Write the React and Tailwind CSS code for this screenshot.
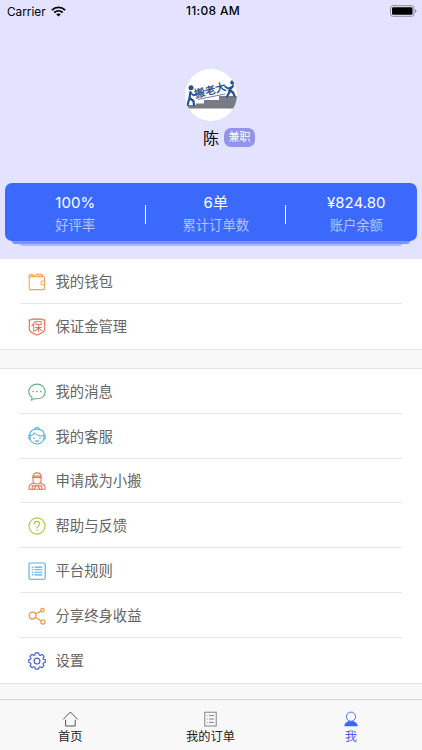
import React from "react";

const iconProps = {
	width: 18,
	height: 18,
	viewBox: "0 0 18 18",
	fill: "none",
	strokeWidth: 1.1,
	strokeLinecap: "round",
	strokeLinejoin: "round",
};

const WalletIcon = () => (
	<svg {...iconProps} stroke="#f2a654">
		<rect x="1.2" y="3.6" width="15.4" height="13" rx="1.2" />
		<path d="M1.2 4.2V2.4Q1.2 1.6 2 1.6H4.6M13.6 1.6Q14.9 1.6 14.9 3.4M3.5 3.5L9.4 1L10.8 3.4M10.2 1.3L12.8 1.1L13.4 3.4" />
		<path d="M16.6 8H14.8A1.9 1.9 0 0 0 14.8 11.8H16.6" />
	</svg>
);

const DepositIcon = () => (
	<svg {...iconProps} stroke="#e0684a">
		<path d="M1.2 1.8Q3 2.4 4.2 1.1H13.8Q15 2.4 16.8 1.8V4.4Q15.8 5.8 16.8 7.4V11C16.8 14.3 13 15.4 9 17.1C5 15.4 1.2 14.3 1.2 11V7.4Q2.2 5.8 1.2 4.4Z" />
		<text
			x="9"
			y="12.8"
			textAnchor="middle"
			fontSize="11.5"
			fill="#e0684a"
			stroke="none"
			className="font-['Noto_Sans_CJK_SC',sans-serif]"
		>
			保
		</text>
	</svg>
);

const MessageIcon = () => (
	<svg {...iconProps} stroke="#5fb283">
		<path d="M4 14.2C2 12.9 .8 10.9 .8 8.7C.8 4.5 4.4 1.1 9 1.1S17.2 4.5 17.2 8.7S13.6 15.8 9 15.8C8.2 15.8 7.4 15.7 6.7 15.5Q5.4 17.1 3.3 17.2Q4.4 15.9 4 14.2Z" />
		<path d="M5.1 8.4H5.3M8.9 8.4H9.1M12.7 8.4H12.9" strokeWidth="1.5" />
	</svg>
);

const ServiceIcon = () => (
	<svg {...iconProps} stroke="#58aedb">
		<path d="M1.9 7.6C1.9 4.1 4.8 2.2 9 2.2S16.1 4.1 16.1 7.6V10.4C16.1 14.3 12.8 17 9 17S1.9 14.3 1.9 10.4Z" />
		<path d="M6.6 2.2C6.8 .1 11.2 .1 11.4 2.2M2.2 8.9Q5.4 8.4 6.4 6Q9 9.2 15.8 8.9" />
		<path d="M1.7 8H.9V12H2.1M16.3 8H17.1V12H15.9M7.3 13.8Q9 14.9 10.7 13.8" />
		<path d="M6 11V11.2M12 11V11.2" strokeWidth="1.5" />
	</svg>
);

const WorkerIcon = () => (
	<svg {...iconProps} stroke="#e87657">
		<path d="M4.8 5.2C4.8 2.5 6.5 .9 9 .9S13.2 2.5 13.2 5.2M4.4 5.4H13.6M5 5.6V8.6C5 10.8 6.8 12 9 12S13 10.8 13 8.6V5.6M6 4H12" />
		<path d="M5.6 11L3 12.3Q1 13.2 1 15.2V17.2H17V15.2Q17 13.2 15 12.3L12.4 11" />
		<path d="M4.2 17V13.9H13.8V17M6.4 16.8L7.8 14.4M11.6 16.8L10.2 14.4" />
	</svg>
);

const HelpIcon = () => (
	<svg {...iconProps} stroke="#a9c944">
		<circle cx="9" cy="9" r="8.1" />
		<path d="M6.4 7C6.4 5.2 7.5 4.3 9 4.3S11.6 5.3 11.6 6.8C11.6 8.8 9 8.9 9 11" strokeWidth="1.2" />
		<path d="M9 13.2V13.4" strokeWidth="1.5" />
	</svg>
);

const RulesIcon = () => (
	<svg {...iconProps} stroke="#58a9de">
		<rect x="1" y="1" width="16.2" height="16.2" rx="1.4" />
		<path d="M4.2 5.1H5M7 5.1H13.8M4.2 7.7H5M7 7.7H13.8M4.2 10.3H5M7 10.3H13.8M4.2 12.9H5M7 12.9H13.8" />
	</svg>
);

const ShareIcon = () => (
	<svg {...iconProps} stroke="#f0994d" strokeWidth="1.3">
		<circle cx="4.5" cy="8.6" r="3.4" />
		<circle cx="14.4" cy="3.2" r="1.7" />
		<circle cx="14.9" cy="15" r="2.1" />
		<path d="M7.5 7L12.8 4.1M7.4 10.5L13.1 13.8" />
	</svg>
);

const SettingsIcon = () => (
	<svg {...iconProps} stroke="#4a62c8" strokeWidth="1.2">
		<path d="M7.4 .9H10.6L11.1 2.9L12.2 3.4L14.1 2.3L16.1 4.4L15 6.2L15.4 7.2L17.3 7.6V10.5L15.4 11L15 12L16 13.7L13.9 15.8L12.1 14.8L11 15.3L10.6 17.2H7.4L7 15.3L5.9 14.8L4.2 15.8L2 13.7L3 12L2.6 11L.8 10.5V7.6L2.6 7.2L3 6.2L1.9 4.4L3.9 2.3L5.8 3.4L6.9 2.9Z" />
		<circle cx="9" cy="9.1" r="2.9" />
	</svg>
);

const HomeIcon = () => (
	<svg width="16" height="16" viewBox="0 0 16 16" fill="none" stroke="#444" strokeWidth="0.9">
		<path d="M1.2 8.4L8.4 1L15.6 8.4M3.6 8.8V15H13.2V8.8" />
	</svg>
);

const OrderIcon = () => (
	<svg width="16" height="16" viewBox="0 0 16 16" fill="none" stroke="#777" strokeWidth="0.9">
		<rect x="2.8" y="1.2" width="11.4" height="13.8" />
		<path d="M4.8 4.6H5.6M7 4.6H12M4.8 8H5.6M7 8H12M4.8 11.4H5.6M7 11.4H12" />
	</svg>
);

const MeIcon = () => (
	<svg width="16" height="16" viewBox="0 0 16 16" fill="none">
		<path d="M1.2 15.2C1.6 11.9 3.8 10 8 9.4C12.2 10 14.4 11.9 14.8 15.2Z" fill="#3c68f8" />
		<circle cx="8" cy="5.7" r="4.6" fill="#f8f8f8" stroke="#3c68f8" strokeWidth="0.9" />
	</svg>
);

const Logo = () => (
	<svg width="52" height="52" viewBox="0 0 52 52">
		<defs>
			<clipPath id="avatar">
				<circle cx="26" cy="26" r="26" />
			</clipPath>
		</defs>
		<circle cx="26" cy="26" r="26" fill="#fff" />
		<g clipPath="url(#avatar)">
			<path d="M1 39.5V36H11V34.5H19V31H34V27H52V39.5Z" fill="#777a80" />
			<path d="M19 35H52M34 31H52" stroke="#8e9196" strokeWidth="0.4" />
			<g fill="none" stroke="#24508f" strokeWidth="2.2" strokeLinecap="round" strokeLinejoin="round">
				<path d="M5.5 23L4.5 29L8.5 32L9 36M4.5 29L2.5 36" />
				<path d="M5.5 23.5L8.5 26.5L11 25" strokeWidth="1.6" />
				<path d="M48 17L44.5 21L48 23.5L49.5 27M44.5 21L44 24L42 27.5" />
				<path d="M46.5 18L43 19.5L40 17.5" strokeWidth="1.6" />
			</g>
			<circle cx="6" cy="18.7" r="2.5" fill="#24508f" />
			<circle cx="47.5" cy="13.5" r="2.2" fill="#24508f" />
			<path d="M13 30.5L40 25" stroke="#24508f" strokeWidth="0.7" />
			<text
				x="10.6"
				y="29"
				fontSize="10.7"
				fontWeight="500"
				fill="#24508f"
				stroke="#24508f"
				strokeWidth="0.2"
				transform="rotate(-14 10.6 29)"
				className="font-['Noto_Sans_CJK_SC',sans-serif]"
			>
				搬老大
			</text>
		</g>
	</svg>
);

const stats = [
	{ value: "100%", label: "好评率" },
	{ value: "6单", label: "累计订单数" },
	{ value: "¥824.80", label: "账户余额" },
];

const accountMenu = [
	{ title: "我的钱包", Icon: WalletIcon },
	{ title: "保证金管理", Icon: DepositIcon },
];

const serviceMenu = [
	{ title: "我的消息", Icon: MessageIcon },
	{ title: "我的客服", Icon: ServiceIcon },
	{ title: "申请成为小搬", Icon: WorkerIcon },
	{ title: "帮助与反馈", Icon: HelpIcon },
	{ title: "平台规则", Icon: RulesIcon },
	{ title: "分享终身收益", Icon: ShareIcon },
	{ title: "设置", Icon: SettingsIcon },
];

const tabs = [
	{ title: "首页", Icon: HomeIcon },
	{ title: "我的订单", Icon: OrderIcon },
	{ title: "我", Icon: MeIcon, active: true },
];

const StatusBar = () => (
	<div className="grid grid-cols-3 items-center h-[22px] pl-[7px] pr-[5px] text-[12px] text-black">
		<div className="flex items-center gap-[5px]">
			<span className="text-[11.8px] leading-[18px] pt-px">Carrier</span>
			<svg width="15" height="11" viewBox="0 0 15 11" fill="none" stroke="#000">
				<path d="M.9 4.1C4.6 .5 10.4 .5 14.1 4.1" strokeWidth="1.9" />
				<path d="M3.3 6.5C5.7 4.2 9.3 4.2 11.7 6.5" strokeWidth="1.8" />
				<path d="M7.5 10.6L5.2 8.3C6.5 7.1 8.5 7.1 9.8 8.3Z" fill="#000" stroke="none" />
			</svg>
		</div>
		<span className="text-center font-medium tracking-[0.3px] pl-0.5 whitespace-nowrap">11:08 AM</span>
		<svg className="justify-self-end" width="27" height="12" viewBox="0 0 27 12">
			<rect x=".5" y=".7" width="23.5" height="10.6" rx="2.4" fill="none" stroke="#8d8d9b" />
			<rect x="2" y="2.2" width="20.5" height="7.6" rx="1.2" />
			<path d="M25 4.2Q26.5 4.7 26.5 6T25 7.8Z" fill="#8d8d9b" />
		</svg>
	</div>
);

const Menu = ({ items }) => (
	<ul className="bg-white">
		{items.map(({ title, Icon }, i) => (
			<li key={title} className="px-5">
				<div
					className={
						i < items.length - 1
							? "flex items-center gap-[9.5px] h-[44.8px] pt-[1.5px] pl-2 border-b border-[#e6e6e6]"
							: "flex items-center gap-[9.5px] h-[44.8px] pt-px pl-2"
					}
				>
					<Icon />
					<span className="text-[14.35px] text-[#666]">{title}</span>
				</div>
			</li>
		))}
	</ul>
);

const App = () => {
	return (
		<div className="flex flex-col w-[422px] h-[750px] overflow-hidden bg-[#f8f8f8] font-[Inter,'Noto_Sans_CJK_SC',sans-serif]">
			<header className="h-[259px] shrink-0 bg-[#e3e3ff]">
				<StatusBar />
				<div className="flex flex-col items-center pt-[47px]">
					<Logo />
					<div className="flex items-center gap-[5px] h-[33px] pl-9">
						<span className="text-[16px] text-black">陈</span>
						<span className="flex items-center h-[19px] px-[4.5px] rounded-[7px] bg-[#9393ea] text-[11px] text-white">
							兼职
						</span>
					</div>
				</div>
				<div className="mt-[28.5px] px-[5px]">
					<div className="grid grid-cols-[140.5px_140.5px_140.5px] h-[58px] mr-[0.5px] rounded-[7px] bg-[#3b69fb] relative z-10">
						{stats.map((item, i) => (
							<div key={item.label} className="relative flex flex-col items-center pt-[9px]">
								<span className="text-[15px] leading-[22px] text-white">{item.value}</span>
								<span className="text-[13.3px] leading-[23px] text-[#b4c4fd]">{item.label}</span>
								{i > 0 && (
									<i className="absolute -left-px top-[22px] w-px h-[19px] bg-white" />
								)}
							</div>
						))}
					</div>
					<div className="h-[3px] mx-[7px] rounded-b-[6px] bg-[#7b94fb]" />
					<div className="h-[2.5px] mx-[15px] rounded-b-[6px] bg-[#b0b8fd]" />
				</div>
			</header>
			<main className="shrink-0">
				<Menu items={accountMenu} />
				<div className="h-[20.4px] border-y border-[#e3e3e3] bg-[#f8f8f8]" />
				<Menu items={serviceMenu} />
			</main>
			<div className="grow border-t border-[#e6e6e6]" />
			<nav className="grid grid-cols-3 h-[51px] shrink-0 pr-px border-t border-[#d6d6d8] bg-[#f8f8f8]">
				{tabs.map(({ title, Icon, active }) => (
					<div key={title} className="flex flex-col items-center pt-[11px]">
						<Icon />
						<span
							className={
								active
									? "text-[12.2px] leading-[20px] text-[#4a5cf0]"
									: "text-[12.2px] leading-[20px] text-[#222]"
							}
						>
							{title}
						</span>
					</div>
				))}
			</nav>
		</div>
	);
};

export default App;
